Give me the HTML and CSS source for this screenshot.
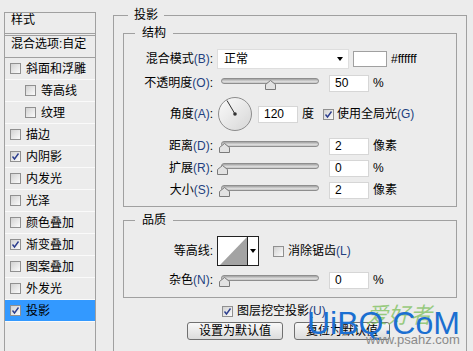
FILE: index.html
```html
<!DOCTYPE html>
<html lang="zh-CN">
<head>
<meta charset="utf-8">
<title>图层样式 - 投影</title>
<link rel="stylesheet" href="styles.css">
</head>
<body>
<div class="app">
  <aside class="styles-panel">
    <div class="sp-head">样式</div>
    <div class="sp-blend">混合选项:自定</div>
    <ul class="sp-list">
      <li class="sp-item"><span class="cb"></span><span>斜面和浮雕</span></li>
      <li class="sp-item sub"><span class="cb"></span><span>等高线</span></li>
      <li class="sp-item sub"><span class="cb"></span><span>纹理</span></li>
      <li class="sp-item"><span class="cb"></span><span>描边</span></li>
      <li class="sp-item"><span class="cb on"><svg viewBox="0 0 9 9" width="9" height="9"><path d="M1.5 4.5 L3.5 7 L7.5 1.5" fill="none" stroke="#2b3d8e" stroke-width="1.4"/></svg></span><span>内阴影</span></li>
      <li class="sp-item"><span class="cb"></span><span>内发光</span></li>
      <li class="sp-item"><span class="cb"></span><span>光泽</span></li>
      <li class="sp-item"><span class="cb"></span><span>颜色叠加</span></li>
      <li class="sp-item"><span class="cb on"><svg viewBox="0 0 9 9" width="9" height="9"><path d="M1.5 4.5 L3.5 7 L7.5 1.5" fill="none" stroke="#2b3d8e" stroke-width="1.4"/></svg></span><span>渐变叠加</span></li>
      <li class="sp-item"><span class="cb"></span><span>图案叠加</span></li>
      <li class="sp-item"><span class="cb"></span><span>外发光</span></li>
      <li class="sp-item selected"><span class="cb on"><svg viewBox="0 0 9 9" width="9" height="9"><path d="M1.5 4.5 L3.5 7 L7.5 1.5" fill="none" stroke="#2b3d8e" stroke-width="1.4"/></svg></span><span>投影</span></li>
    </ul>
  </aside>

  <main class="settings">
    <fieldset class="group outer">
      <legend>投影</legend>

      <fieldset class="group inner struct">
        <legend>结构</legend>

        <div class="row row-mode">
          <span class="lbl">混合模式<span class="key">(B)</span>:</span>
          <div class="select"><span>正常</span><span class="arrow"></span></div>
          <span class="swatch"></span>
          <span class="hex">#ffffff</span>
        </div>

        <div class="row row-opacity">
          <span class="lbl">不透明度<span class="key">(O)</span>:</span>
          <div class="slider"><span class="track"></span><svg class="thumb" style="left:46px" viewBox="0 0 11 10" width="11" height="10"><path d="M0.5 9.5 L0.5 4.5 L5.5 0.5 L10.5 4.5 L10.5 9.5 Z" fill="#e2e2e2" stroke="#7a7a7a"/></svg></div>
          <span class="num">50</span>
          <span class="unit">%</span>
        </div>

        <div class="row row-angle">
          <span class="lbl">角度<span class="key">(A)</span>:</span>
          <svg class="dial" viewBox="0 0 34 34" width="34" height="34">
            <defs><linearGradient id="dg" x1="0" y1="0" x2="1" y2="1"><stop offset="0" stop-color="#fbfbfb"/><stop offset="1" stop-color="#d6d6d6"/></linearGradient></defs>
            <circle cx="17" cy="17" r="16.5" fill="url(#dg)" stroke="#8c8c8c"/>
            <line x1="17" y1="17" x2="9" y2="3.5" stroke="#333" stroke-width="1"/>
            <circle cx="17" cy="17" r="1.8" fill="#333"/>
          </svg>
          <span class="num angle">120</span>
          <span class="unit">度</span>
          <span class="check-label"><span class="cb on"><svg viewBox="0 0 9 9" width="9" height="9"><path d="M1.5 4.5 L3.5 7 L7.5 1.5" fill="none" stroke="#2b3d8e" stroke-width="1.4"/></svg></span><span class="cl-text">使用全局光<span class="key">(G)</span></span></span>
        </div>

        <div class="row row-dist">
          <span class="lbl">距离<span class="key">(D)</span>:</span>
          <div class="slider"><span class="track"></span><svg class="thumb" style="left:0px" viewBox="0 0 11 10" width="11" height="10"><path d="M0.5 9.5 L0.5 4.5 L5.5 0.5 L10.5 4.5 L10.5 9.5 Z" fill="#e2e2e2" stroke="#7a7a7a"/></svg></div>
          <span class="num">2</span>
          <span class="unit">像素</span>
        </div>

        <div class="row">
          <span class="lbl">扩展<span class="key">(R)</span>:</span>
          <div class="slider"><span class="track"></span><svg class="thumb" style="left:-2px" viewBox="0 0 11 10" width="11" height="10"><path d="M0.5 9.5 L0.5 4.5 L5.5 0.5 L10.5 4.5 L10.5 9.5 Z" fill="#e2e2e2" stroke="#7a7a7a"/></svg></div>
          <span class="num">0</span>
          <span class="unit">%</span>
        </div>

        <div class="row">
          <span class="lbl">大小<span class="key">(S)</span>:</span>
          <div class="slider"><span class="track"></span><svg class="thumb" style="left:0px" viewBox="0 0 11 10" width="11" height="10"><path d="M0.5 9.5 L0.5 4.5 L5.5 0.5 L10.5 4.5 L10.5 9.5 Z" fill="#e2e2e2" stroke="#7a7a7a"/></svg></div>
          <span class="num">2</span>
          <span class="unit">像素</span>
        </div>
      </fieldset>

      <fieldset class="group inner quality">
        <legend>品质</legend>

        <div class="row row-contour">
          <span class="lbl">等高线:</span>
          <div class="contour">
            <svg class="preview" viewBox="0 0 29 28" width="29" height="28"><polygon points="2,28 29,0 29,28" fill="#a3a3a3"/></svg>
            <span class="drop"><span class="arrow"></span></span>
          </div>
          <span class="check-label aa"><span class="cb"></span><span class="cl-text">消除锯齿<span class="key">(L)</span></span></span>
        </div>

        <div class="row row-noise">
          <span class="lbl">杂色<span class="key">(N)</span>:</span>
          <div class="slider"><span class="track"></span><svg class="thumb" style="left:0px" viewBox="0 0 11 10" width="11" height="10"><path d="M0.5 9.5 L0.5 4.5 L5.5 0.5 L10.5 4.5 L10.5 9.5 Z" fill="#e2e2e2" stroke="#7a7a7a"/></svg></div>
          <span class="num">0</span>
          <span class="unit">%</span>
        </div>
      </fieldset>

      <div class="knockout"><span class="cb on"><svg viewBox="0 0 9 9" width="9" height="9"><path d="M1.5 4.5 L3.5 7 L7.5 1.5" fill="none" stroke="#2b3d8e" stroke-width="1.4"/></svg></span><span class="cl-text">图层挖空投影<span class="key">(U)</span></span></div>

      <div class="buttons">
        <button class="btn" type="button">设置为默认值</button>
        <button class="btn" type="button">复位为默认值</button>
      </div>
    </fieldset>
  </main>

  <div class="watermark">
    <span class="wm-green">爱好者</span>
    <span class="wm-blue">UiBQ.CoM</span>
    <span class="wm-url">www.psahz.com</span>
  </div>
</div>
</body>
</html>
```

FILE: styles.css
```css
html, body {
  margin: 0;
  height: 351px;
  overflow: hidden;
  background: #ececec;
}

body {
  font-family: "Liberation Sans", "Noto Sans CJK SC", sans-serif;
  font-size: 12px;
  line-height: 14px;
  color: #000;
}

.app {
  position: relative;
  display: flex;
  align-items: flex-start;
  height: 351px;
}

/* ---------- left styles list ---------- */
.styles-panel {
  box-sizing: border-box;
  width: 92px;
  height: 400px;
  margin: 12px 0 0 4px;
  border: 1px solid #a0a0a0;
  flex: none;
}

.sp-head {
  height: 20px;
  line-height: 14px;
  padding-left: 6px;
  border-bottom: 3px double #a0a0a0;
}

.sp-blend {
  height: 21px;
  line-height: 16px;
  padding-left: 6px;
  border-bottom: 1px solid #a0a0a0;
}

.sp-list {
  list-style: none;
  margin: 0;
  padding: 0;
}

.sp-item {
  display: flex;
  align-items: center;
  height: 21px;
  padding-left: 5px;
  border-bottom: 1px solid #fafafa;
}

.sp-item.sub {
  padding-left: 20px;
}

.sp-item .cb {
  margin-right: 5px;
}

.sp-item.selected {
  background: #3399ff;
}

/* ---------- checkbox ---------- */
.cb {
  box-sizing: border-box;
  width: 11px;
  height: 11px;
  border: 1px solid #909090;
  background: linear-gradient(135deg, #d2d2d2, #fbfbfb);
  display: inline-flex;
  align-items: center;
  justify-content: center;
  flex: none;
}

.cb svg {
  display: block;
}

/* ---------- right settings ---------- */
.settings {
  margin: 8px 0 0 17px;
  flex: none;
}

.group {
  margin: 0;
  padding: 0;
  border: 1px solid #a0a0a0;
  min-width: 0;
  box-sizing: border-box;
}

.group > legend {
  line-height: 14px;
}

.outer {
  width: 354px;
  padding-bottom: 40px;
}

.outer > legend {
  margin-left: 14px;
  padding: 0 6px;
}

.inner {
  margin-left: 9px;
  margin-right: 9px;
}

.inner > legend {
  margin-left: 11px;
  padding: 0 7px;
}

.struct {
  margin-top: 4px;
  padding-bottom: 5px;
}

.quality {
  margin-top: 6px;
  padding-bottom: 7px;
}

.row {
  display: flex;
  align-items: center;
  height: 22px;
}

.row-mode { margin-top: 8px; }
.row-opacity { margin-top: 2px; }
.row-angle { margin-top: 1px; height: 38px; }
.row-dist { margin-top: 2px; }
.row-contour { margin-top: 9px; height: 30px; }
.row-noise { margin-top: 4px; height: 20px; }

.lbl {
  width: 89px;
  flex: none;
  text-align: right;
  white-space: nowrap;
}

.key {
  color: #233f80;
}

.select {
  box-sizing: border-box;
  width: 132px;
  height: 20px;
  margin-left: 4px;
  padding-left: 6px;
  background: #fff;
  border: 1px solid #dedede;
  display: flex;
  align-items: center;
  flex: none;
}

.arrow {
  width: 0;
  height: 0;
  border-left: 3px solid transparent;
  border-right: 3px solid transparent;
  border-top: 4px solid #000;
}

.select .arrow {
  margin-left: auto;
  margin-right: 5px;
}

.swatch {
  box-sizing: border-box;
  width: 34px;
  height: 16px;
  margin-left: 4px;
  border: 1px solid #a0a0a0;
  background: #fff;
  flex: none;
}

.hex {
  margin-left: 4px;
}

.slider {
  position: relative;
  width: 100px;
  height: 14px;
  margin-left: 6px;
  flex: none;
}

.track {
  position: absolute;
  left: 2px;
  right: 0;
  top: 2px;
  height: 6px;
  box-sizing: border-box;
  border-radius: 3px;
  border: 1px solid #8e8e8e;
  background: linear-gradient(#a0a0a0, #dcdcdc 60%, #c6c6c6);
}

.thumb {
  position: absolute;
  top: 4px;
  display: block;
}

.num {
  box-sizing: border-box;
  width: 40px;
  height: 17px;
  margin-left: 10px;
  padding-left: 5px;
  line-height: 15px;
  background: #fff;
  border: 1px solid #d6d6d6;
  flex: none;
}

.unit {
  margin-left: 4px;
}

.dial {
  margin-left: 5px;
  flex: none;
  display: block;
}

.num.angle {
  margin-left: 6px;
}

.check-label {
  display: flex;
  align-items: center;
  margin-left: 9px;
}

.cl-text {
  margin-left: 3px;
}

.contour {
  box-sizing: border-box;
  width: 42px;
  height: 30px;
  margin-left: 4px;
  border: 1px solid #222;
  background: #fff;
  display: flex;
  flex: none;
}

.contour .preview {
  display: block;
  flex: none;
}

.contour .drop {
  flex: 1;
  border-left: 1px solid #222;
  display: flex;
  align-items: center;
  justify-content: center;
}

.check-label.aa {
  margin-left: 14px;
}

.check-label.aa .cl-text {
  margin-left: 4px;
}

.knockout {
  display: flex;
  align-items: center;
  height: 16px;
  margin: 5px 0 0 108px;
}

.knockout .cl-text {
  margin-left: 4px;
}

.buttons {
  display: flex;
  gap: 11px;
  margin: 3px 0 0 73px;
}

.btn {
  box-sizing: border-box;
  width: 96px;
  height: 18px;
  padding: 0;
  border: 1px solid #707070;
  border-radius: 3px;
  background: linear-gradient(#f8f8f8, #dcdcdc);
  font: inherit;
  line-height: 16px;
  color: #000;
  text-align: center;
}

/* ---------- watermark ---------- */
.watermark {
  position: absolute;
  left: 0;
  top: 0;
  width: 473px;
  height: 351px;
  pointer-events: none;
}

.wm-blue {
  position: absolute;
  left: 307px;
  top: 307px;
  font-family: "Liberation Sans", sans-serif;
  font-size: 32px;
  line-height: 32px;
  color: #1b6fd1;
  white-space: nowrap;
}

.wm-green {
  position: absolute;
  left: 366px;
  top: 300px;
  font-family: "Noto Sans CJK SC", sans-serif;
  font-size: 22px;
  line-height: 26px;
  font-style: italic;
  color: #7bbf5a;
  opacity: 0.75;
  white-space: nowrap;
}

.wm-url {
  position: absolute;
  left: 366px;
  top: 333px;
  font-family: "Liberation Sans", sans-serif;
  font-size: 13px;
  line-height: 14px;
  color: #8a8a8a;
  white-space: nowrap;
}
```
